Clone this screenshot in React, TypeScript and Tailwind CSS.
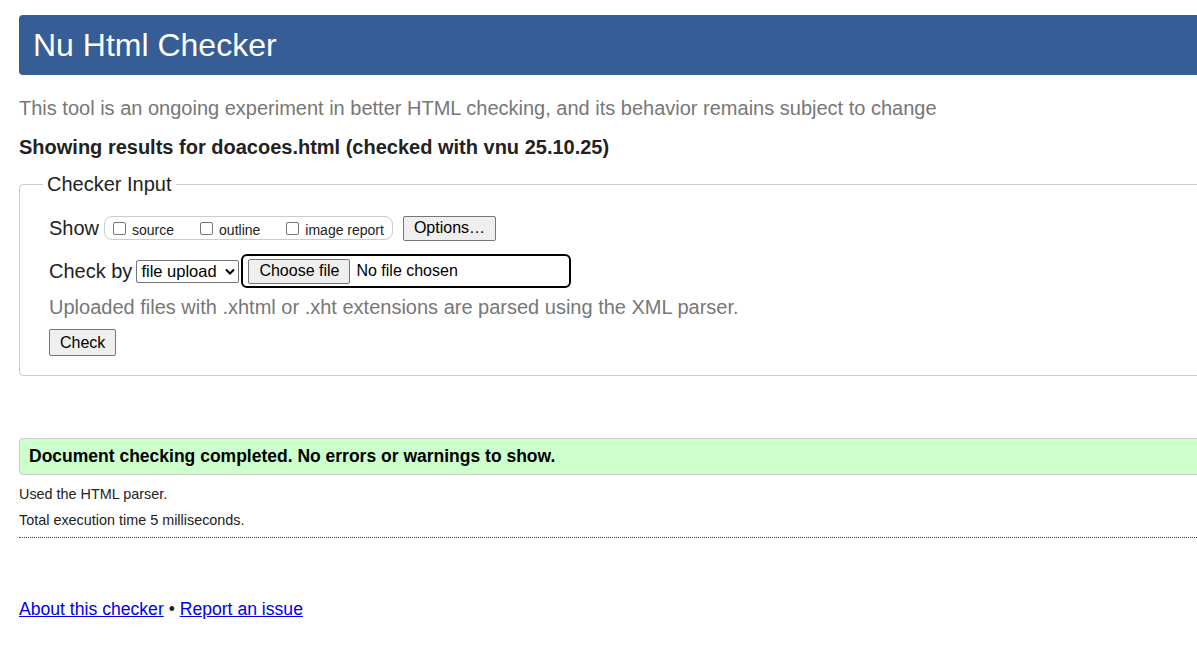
import React from "react";

const font = { fontFamily: '"Liberation Sans", Arial, sans-serif' };

function Btn({ children, className = "" }: { children: React.ReactNode; className?: string }) {
  return (
    <button
      type="button"
      className={`rounded-[2px] border border-[#767676] bg-[#efefef] leading-none text-black ${className}`}
    >
      {children}
    </button>
  );
}

function Box({ label }: { label: string }) {
  return (
    <label className="flex items-center text-[14px] text-[#222]">
      <span className="mr-[6px] inline-block h-[13px] w-[13px] rounded-[2px] border border-[#767676] bg-white" />
      <span className="mt-[4px]">{label}</span>
    </label>
  );
}

export default function App() {
  return (
    <div className="h-[647px] w-full overflow-hidden bg-white text-[#222]" style={font}>
      <div className="ml-[19px] w-[1240px] pt-[15px]">
        <header className="flex h-[60px] items-center rounded-[4px] bg-[#365d95] pl-[14px]">
          <h1 className="text-[32px] leading-none text-white">Nu Html Checker</h1>
        </header>

        <p className="mt-[23px] text-[20px] leading-none text-[#777]">
          This tool is an ongoing experiment in better HTML checking, and its behavior remains subject to change
        </p>
        <p className="mt-[19px] text-[20px] font-bold leading-none text-[#222]">
          Showing results for doacoes.html (checked with vnu 25.10.25)
        </p>

        <fieldset className="mt-[17px] rounded-[4px] border border-[#ccc] pb-[19px] pt-[19px]">
          <legend className="ml-[23px] px-[4px] text-[20px] leading-none text-[#222]">Checker Input</legend>

          <div className="pl-[29px]">
            <div className="flex items-center">
              <span className="mr-[5px] text-[20px] text-[#222]">Show</span>
              <div className="flex h-[24px] items-center gap-[26px] rounded-[8px] border border-[#ccc] pl-[8px] pr-[8px]">
                <Box label="source" />
                <Box label="outline" />
                <Box label="image report" />
              </div>
              <Btn className="ml-[10px] h-[25px] px-[10px] text-[16px]">Options…</Btn>
            </div>

            <div className="mt-[11px] flex items-center">
              <span className="mr-[4px] text-[20px] text-[#222]">Check by</span>
              <div className="flex h-[23px] w-[103px] items-center justify-between rounded-[2px] border border-[#767676] bg-white pl-[4px] pr-[3px] text-[16.5px] text-black">
                <span>file upload</span>
                <svg width="10" height="7" viewBox="0 0 10 7" fill="none">
                  <path d="M1 1.5 5 5.5 9 1.5" stroke="#000" strokeWidth="2" />
                </svg>
              </div>
              <div className="ml-[2px] flex h-[34px] w-[330px] items-center rounded-[6px] border-2 border-black pl-[5px]">
                <Btn className="h-[25px] px-[10px] text-[16px]">Choose file</Btn>
                <span className="ml-[6px] text-[16px] text-black">No file chosen</span>
              </div>
            </div>

            <p className="mt-[4px] text-[20px] text-[#777]">
              Uploaded files with .xhtml or .xht extensions are parsed using the XML parser.
            </p>

            <Btn className="mt-[7px] h-[27px] px-[10px] text-[16px]">Check</Btn>
          </div>
        </fieldset>

        <div className="mt-[62px] flex h-[37px] items-center rounded-[4px] border border-[#ccc] bg-[#ccffcc] pl-[9px]">
          <p className="text-[17.5px] font-bold text-black">Document checking completed. No errors or warnings to show.</p>
        </div>

        <p className="mt-[9px] text-[14.4px] text-[#222]">Used the HTML parser.</p>
        <p className="mt-[4px] text-[14.4px] text-[#222]">Total execution time 5 milliseconds.</p>
        <hr className="mt-[6px] border-0 border-t border-dotted border-[#444]" />

        <p className="mt-[58px] text-[17.6px] text-[#222]">
          <a href="#" className="text-[#0000ee] underline">About this checker</a>
          {" • "}
          <a href="#" className="text-[#0000ee] underline">Report an issue</a>
        </p>
      </div>
    </div>
  );
}
